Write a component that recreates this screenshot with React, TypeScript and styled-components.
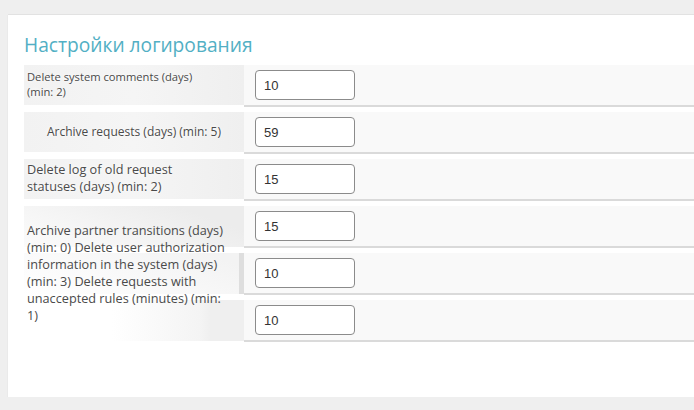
import React from "react";
import styled, { createGlobalStyle } from "styled-components";

const Global = createGlobalStyle`
  html, body { margin: 0; padding: 0; overflow: hidden; }
  body { background: #efefef; font-family: "Open Sans", "Liberation Sans", sans-serif; }
`;

const Page = styled.div`
  padding: 14px 0 0 8px;
  width: 760px;
`;

const Card = styled.section`
  background: #fff;
  border-top: 1px solid #e2e2e2;
  box-shadow: 0 1px 1px rgba(0, 0, 0, 0.12);
  padding: 17px 16px 55px 16px;
  height: 383px;
  box-sizing: border-box;
`;

const Title = styled.h2`
  margin: 0 0 7px 0;
  font-family: "Open Sans", sans-serif;
  font-weight: 400;
  font-size: 19.2px;
  line-height: 26px;
  color: #52afc4;
`;

const Grid = styled.div`
  display: grid;
  grid-template-columns: 220px 1fr;
  grid-auto-rows: 42px;
  row-gap: 5px;
`;

const LabelCell = styled.div<{ $center?: boolean; $size: number; $row: number }>`
  grid-column: 1;
  grid-row: ${(p) => p.$row};
  display: flex;
  align-items: center;
  justify-content: ${(p) => (p.$center ? "center" : "flex-start")};
  padding: 0 3px 2px 3px;
  height: 40px;
  box-sizing: border-box;
  font-size: ${(p) => p.$size}px;
  line-height: ${(p) => (p.$size < 12 ? 15 : 17)}px;
  color: #4a4a4a;
  background: linear-gradient(to right, #f2f2f2 0%, #f5f5f5 50%, #efefef 100%);
  text-shadow: 0 0 6px #fff, 0 0 3px #fff;
`;

const LabelText = styled.span<{ $max?: number }>`
  max-width: ${(p) => p.$max ?? 198}px;
`;

const SpanBg = styled.div<{ $row: number; $variant: "top" | "mid" | "bottom" }>`
  grid-column: 1;
  grid-row: ${(p) => p.$row};
  height: 41px;
  background: ${(p) =>
    p.$variant === "top"
      ? "linear-gradient(200deg, #ececec 20%, #f6f6f6 70%, #fbfbfb 100%)"
      : p.$variant === "mid"
      ? "linear-gradient(200deg, #f3f3f3 10%, #fafafa 60%, #ffffff 100%)"
      : "linear-gradient(to right, #ffffff 0%, #ffffff 40%, #f4f4f4 80%, #efefef 85%)"};
  border-right: ${(p) => (p.$variant === "mid" ? "5px solid #dedede" : "none")};
  box-sizing: border-box;
`;

const SpanLabel = styled.div`
  grid-column: 1;
  grid-row: 4 / span 3;
  display: flex;
  align-items: center;
  padding: 0 3px 2px 3px;
  box-sizing: border-box;
  font-size: 12.7px;
  line-height: 17px;
  color: #4a4a4a;
  z-index: 1;
`;

const InputCell = styled.div<{ $row: number }>`
  grid-column: 2;
  grid-row: ${(p) => p.$row};
  background: #f9f9f9;
  border-bottom: 2px solid #dadada;
  padding: 5px 0 0 11px;
  box-sizing: border-box;
`;

const Field = styled.input`
  width: 100px;
  height: 30px;
  box-sizing: border-box;
  border: 1px solid #8b8b8b;
  border-radius: 4px;
  background: #fff;
  padding: 0 8px;
  font-family: "Liberation Sans", Arial, sans-serif;
  font-size: 13px;
  color: #333;
  outline: none;
`;

const rows = [
  { label: "Delete system comments (days) (min: 2)", value: "10", size: 11.2, max: 175 },
  { label: "Archive requests (days) (min: 5)", value: "59", size: 12, center: true, max: 198 },
  { label: "Delete log of old request statuses (days) (min: 2)", value: "15", size: 12.7, max: 180 },
];

const spanText =
  "Archive partner transitions (days) (min: 0) Delete user authorization information in the system (days) (min: 3) Delete requests with unaccepted rules (minutes) (min: 1)";

const spanValues = ["15", "10", "10"];

export default function App() {
  return (
    <>
      <Global />
      <Page>
        <Card>
          <Title>Настройки логирования</Title>
          <Grid>
            {rows.map((r, i) => (
              <React.Fragment key={i}>
                <LabelCell $center={r.center} $size={r.size} $row={i + 1}>
                  <LabelText $max={r.max}>{r.label}</LabelText>
                </LabelCell>
                <InputCell $row={i + 1}>
                  <Field defaultValue={r.value} />
                </InputCell>
              </React.Fragment>
            ))}
            <SpanBg $row={4} $variant="top" />
            <SpanBg $row={5} $variant="mid" />
            <SpanBg $row={6} $variant="bottom" />
            <SpanLabel>
              <LabelText>{spanText}</LabelText>
            </SpanLabel>
            {spanValues.map((v, i) => (
              <InputCell key={i} $row={i + 4}>
                <Field defaultValue={v} />
              </InputCell>
            ))}
          </Grid>
        </Card>
      </Page>
    </>
  );
}
